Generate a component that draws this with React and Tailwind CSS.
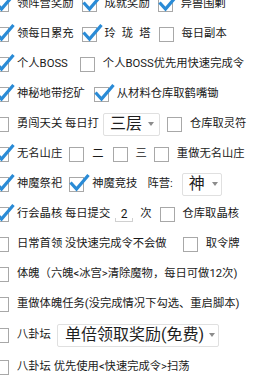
import React from "react";

function Box({ checked }) {
  return (
    <span className="relative inline-block w-[15px] h-[15px] shrink-0 border-[1.5px] border-[#a8a8a8] bg-white">
      {checked && (
        <svg
          className="absolute left-[-2px] top-[-7px]"
          width="22"
          height="22"
          viewBox="0 0 22 22"
        >
          <path
            d="M2.5 11.5 L8.5 18 L20.5 4"
            fill="none"
            stroke="#2a8bd6"
            strokeWidth="3.2"
            strokeLinecap="butt"
            strokeLinejoin="miter"
          />
        </svg>
      )}
    </span>
  );
}

function Check({ checked, children, className = "" }) {
  return (
    <span className={`inline-flex items-center shrink-0 ${className}`}>
      <Box checked={checked} />
      <span className="ml-[8px] whitespace-nowrap">{children}</span>
    </span>
  );
}

function Arrow() {
  return (
    <svg width="6" height="4" viewBox="0 0 6 4" className="shrink-0">
      <path d="M0 0 L6 0 L3 4 Z" fill="#8c8c8c" />
    </svg>
  );
}

function Spinner({ children, className }) {
  return (
    <span
      className={`inline-flex items-center justify-between h-[23px] border border-[#e0e0e0] rounded-[2px] bg-white shrink-0 ${className}`}
    >
      <span className="text-[16px] leading-none text-[#1e1e1e]">{children}</span>
      <Arrow />
    </span>
  );
}

function Row({ children, className = "" }) {
  return (
    <div className={`flex items-center h-[30px] whitespace-nowrap ${className}`}>
      {children}
    </div>
  );
}

export default function App() {
  return (
    <div
      className="w-[280px] h-[380px] overflow-hidden bg-white text-[11.3px] text-[#1a1a1a]"
      style={{ fontFamily: "Roboto, 'Noto Sans CJK SC', sans-serif" }}
    >
      <div className="mt-[-11px] ml-[-6px] flex flex-col">
        <Row>
          <Check checked>领阵营奖励</Check>
          <Check checked className="ml-[8px]">成就奖励</Check>
          <Check checked className="ml-[8px]">异兽围剿</Check>
        </Row>
        <Row>
          <Check checked>领每日累充</Check>
          <Check checked className="ml-[8px]">
            <span className="inline-flex w-[46px] justify-between">
              <span>玲</span>
              <span>珑</span>
              <span>塔</span>
            </span>
          </Check>
          <Check className="ml-[8px]">每日副本</Check>
        </Row>
        <Row>
          <Check checked>个人BOSS</Check>
          <Check className="ml-[12px]">个人BOSS优先用快速完成令</Check>
        </Row>
        <Row>
          <Check checked>神秘地带挖矿</Check>
          <Check checked className="ml-[9px]">从材料仓库取鹤嘴锄</Check>
        </Row>
        <Row>
          <Check>勇闯天关 每日打</Check>
          <Spinner className="ml-[4px] w-[57px] pl-[6px] pr-[5px]">三层</Spinner>
          <Check className="ml-[7px]">仓库取灵符</Check>
        </Row>
        <Row>
          <Check checked>无名山庄</Check>
          <Check className="ml-[7px]">二</Check>
          <Check className="ml-[9px]">三</Check>
          <Check className="ml-[7px]">重做无名山庄</Check>
        </Row>
        <Row>
          <Check checked>神魔祭祀</Check>
          <Check checked className="ml-[7px]">神魔竞技</Check>
          <span className="ml-[10px]">阵营:</span>
          <Spinner className="ml-[9px] w-[40px] pl-[6px] pr-[3px]">神</Spinner>
        </Row>
        <Row>
          <Check checked>行会晶核 每日提交</Check>
          <span className="relative ml-[4px] inline-flex w-[20px] h-[20px] items-center justify-center text-[12px]">
            2
            <span className="absolute left-[1px] right-[1px] bottom-[2px] h-[4px] border-l border-r border-b border-[#d0d0d0]" />
          </span>
          <span className="ml-[6px]">次</span>
          <Check className="ml-[8px]">仓库取晶核</Check>
        </Row>
        <Row>
          <Check>日常首领 没快速完成令不会做</Check>
          <Check className="ml-[16px]">取令牌</Check>
        </Row>
        <Row>
          <Check>体魄（六魄&lt;冰宫&gt;清除魔物，每日可做12次)</Check>
        </Row>
        <Row>
          <Check>重做体魄任务(没完成情况下勾选、重启脚本)</Check>
        </Row>
        <Row className="mt-[1px]">
          <Check>八卦坛</Check>
          <Spinner className="ml-[6px] w-[162px] pl-[7px] pr-[3px]">单倍领取奖励(免费)</Spinner>
        </Row>
        <Row className="mt-[2px]">
          <Check>八卦坛 优先使用&lt;快速完成令&gt;扫荡</Check>
        </Row>
      </div>
    </div>
  );
}
